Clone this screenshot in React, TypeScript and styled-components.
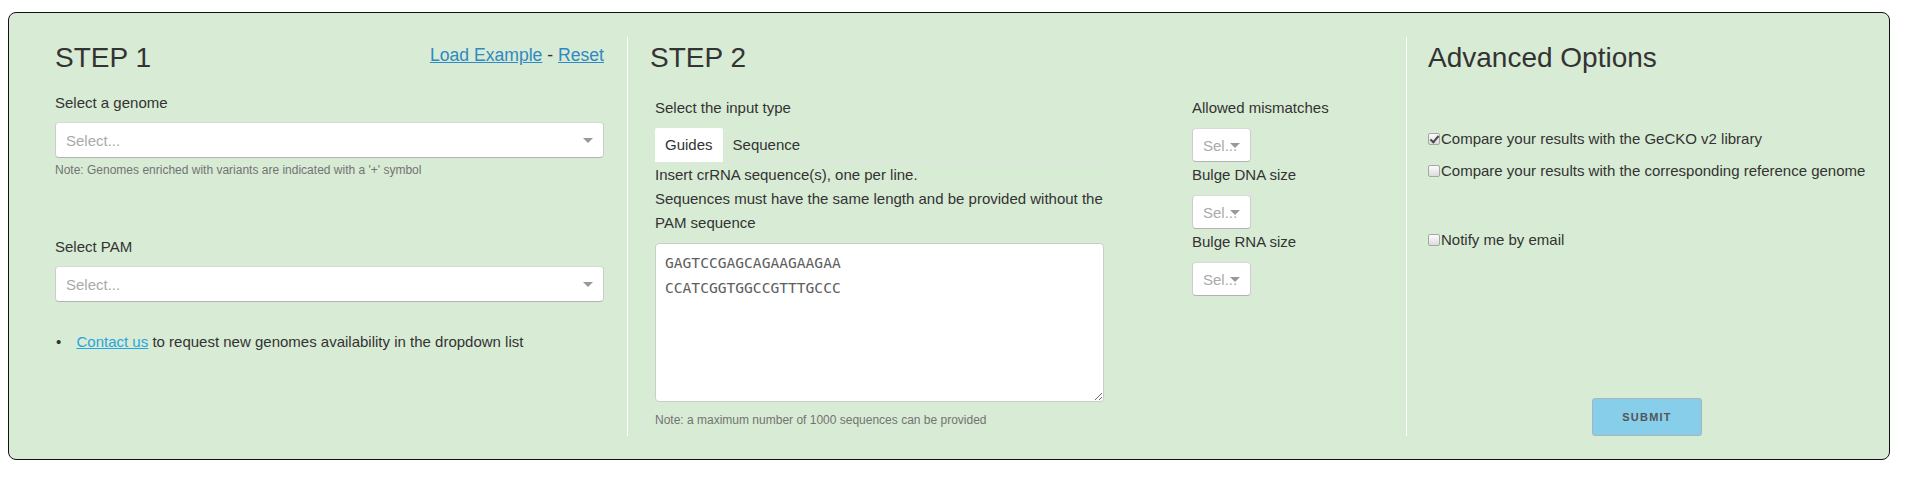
import React from "react";
import styled, { createGlobalStyle } from "styled-components";

const GlobalStyle = createGlobalStyle`
  html, body { margin: 0; padding: 0; background: #ffffff; }
  body {
    font-family: "Liberation Sans", Arial, Helvetica, sans-serif;
    font-size: 15px;
    color: #333333;
  }
  * { box-sizing: border-box; }
`;

const Page = styled.div`
  padding: 12px 0 17px 8px;
`;

const Panel = styled.form`
  width: 1882px;
  height: 448px;
  background: #d8ebd5;
  border: 1px solid #111;
  border-radius: 8px;
  padding: 24px 0 23px 46px;
  display: flex;
`;

const Column = styled.section<{ $divider?: boolean; $width?: number }>`
  display: flex;
  flex-direction: column;
  flex: ${(p) => (p.$width ? `0 0 ${p.$width}px` : "1 1 auto")};
  border-left: ${(p) => (p.$divider ? "1px solid #ffffff" : "none")};
`;

const StepOne = styled(Column)`
  padding-right: 23px;
`;

const StepTwo = styled(Column)`
  padding-left: 22px;
`;

const Advanced = styled(Column)`
  padding-left: 21px;
  padding-right: 23px;
`;

const Header = styled.div`
  display: flex;
  justify-content: space-between;
  align-items: flex-start;
  margin-top: 4px;
`;

const StepTitle = styled.h2`
  margin: 0;
  font-size: 28px;
  line-height: 33px;
  font-weight: 400;
  color: #333;
`;

const HeaderLinks = styled.div`
  margin-top: 3px;
  font-size: 17.6px;
  line-height: 22px;
  color: #333;
`;

const TextLink = styled.a<{ $tone?: "dark" | "light" }>`
  color: ${(p) => (p.$tone === "light" ? "#27a5dc" : "#3089c2")};
  text-decoration: underline;
  cursor: pointer;
`;

const FieldLabel = styled.label<{ $top?: number; $bottom?: number }>`
  display: block;
  margin-top: ${(p) => p.$top ?? 0}px;
  margin-bottom: ${(p) => p.$bottom ?? 8}px;
  line-height: 22px;
  font-size: 15px;
  font-weight: 400;
`;

const SelectBox = styled.div<{ $width?: number; $height?: number }>`
  display: grid;
  align-items: center;
  width: ${(p) => (p.$width ? `${p.$width}px` : "100%")};
  height: ${(p) => p.$height ?? 36}px;
  background: #ffffff;
  border: 1px solid #cccccc;
  border-color: #d9d9d9 #cccccc #b3b3b3;
  border-radius: 4px;
  cursor: default;
`;

const Placeholder = styled.span<{ $padRight?: number }>`
  grid-area: 1 / 1;
  padding: 0 ${(p) => p.$padRight ?? 30}px 0 10px;
  color: #aaaaaa;
  font-size: 15px;
  white-space: nowrap;
  overflow: hidden;
`;

const Caret = styled.span`
  grid-area: 1 / 1;
  justify-self: end;
  margin-right: 10px;
  width: 0;
  height: 0;
  border-style: solid;
  border-width: 5px 5px 2.5px;
  border-color: #999 transparent transparent;
  margin-top: 2px;
`;

const HelpNote = styled.p<{ $top?: number }>`
  margin: ${(p) => p.$top ?? 4}px 0 0;
  font-size: 12px;
  line-height: 17px;
  color: #737373;
`;

const BulletList = styled.ul`
  margin: 29px 0 0;
  padding: 0;
  list-style: none;
  line-height: 22px;
  font-size: 15px;
`;

const BulletItem = styled.li`
  &::before {
    content: "•";
    display: inline-block;
    width: 20.5px;
    padding-left: 1px;
    color: #333;
  }
`;

const StepBody = styled.div`
  display: grid;
  grid-template-columns: 449px auto;
  column-gap: 88px;
  margin-top: 23px;
  padding-left: 5px;
`;

const InputPane = styled.div`
  display: flex;
  flex-direction: column;
`;

const OptionPane = styled.div`
  display: flex;
  flex-direction: column;
  align-items: flex-start;
`;

const TabBar = styled.ul`
  display: flex;
  margin: 0;
  padding: 0;
  list-style: none;
  border-bottom: 1px solid #e3e3e3;
  height: 34px;
`;

const Tab = styled.li<{ $active?: boolean }>`
  padding: 6px 10px;
  line-height: 21px;
  height: 34px;
  margin-bottom: -1px;
  background: ${(p) => (p.$active ? "#ffffff" : "transparent")};
  border-radius: 2px 2px 0 0;
  color: #333;
  cursor: pointer;
`;

const Instructions = styled.p`
  margin: 1px 0 0;
  line-height: 24px;
`;

const SequenceArea = styled.textarea`
  margin-top: 8px;
  width: 449px;
  height: 159px;
  padding: 6px 9px;
  font-family: "DejaVu Sans Mono", "Liberation Mono", monospace;
  font-size: 14.6px;
  line-height: 25px;
  color: #5e5e5e;
  background: #ffffff;
  border: 1px solid #cccccc;
  border-radius: 4px;
  outline: none;
`;

const OptionSelect = styled(SelectBox)`
  margin-bottom: 2px;
`;

const CheckRow = styled.label<{ $top: number }>`
  display: block;
  margin-top: ${(p) => p.$top}px;
  line-height: 22px;
  font-size: 15px;
`;

const Check = styled.input.attrs({ type: "checkbox" })`
  appearance: none;
  -webkit-appearance: none;
  position: relative;
  width: 12px;
  height: 12px;
  margin: 0 1px 0 0;
  border: 1px solid #a6a6a6;
  border-radius: 2px;
  background: linear-gradient(#fcfcfc, #dcdcdc);
  vertical-align: -1px;
  &:checked::after {
    content: "";
    position: absolute;
    left: 3px;
    top: 0px;
    width: 3px;
    height: 7px;
    border: solid #4a4a4a;
    border-width: 0 2px 2px 0;
    transform: rotate(40deg);
  }
`;

const SubmitButton = styled.button`
  margin-top: auto;
  align-self: center;
  width: 110px;
  height: 38px;
  background: #87ceeb;
  border: 1px solid #a9b5bb;
  border-radius: 3px;
  font-family: "Liberation Sans", Arial, sans-serif;
  font-size: 11px;
  font-weight: 700;
  letter-spacing: 1.2px;
  color: #555555;
  cursor: pointer;
`;

function Dropdown() {
  return (
    <SelectBox>
      <Placeholder>Select...</Placeholder>
      <Caret />
    </SelectBox>
  );
}

function SmallDropdown() {
  return (
    <OptionSelect $width={59} $height={34}>
      <Placeholder $padRight={4}>Sel...</Placeholder>
      <Caret />
    </OptionSelect>
  );
}

export default function App() {
  return (
    <>
      <GlobalStyle />
      <Page>
        <Panel onSubmit={(e) => e.preventDefault()}>
          <StepOne $width={572}>
            <Header>
              <StepTitle>STEP 1</StepTitle>
              <HeaderLinks>
                <TextLink>Load Example</TextLink> - <TextLink>Reset</TextLink>
              </HeaderLinks>
            </Header>
            <FieldLabel $top={18}>Select a genome</FieldLabel>
            <Dropdown />
            <HelpNote>Note: Genomes enriched with variants are indicated with a '+' symbol</HelpNote>
            <FieldLabel $top={57}>Select PAM</FieldLabel>
            <Dropdown />
            <BulletList>
              <BulletItem>
                <TextLink $tone="light">Contact us</TextLink> to request new genomes availability in the dropdown list
              </BulletItem>
            </BulletList>
          </StepOne>

          <StepTwo $divider $width={779}>
            <Header>
              <StepTitle>STEP 2</StepTitle>
            </Header>
            <StepBody>
              <InputPane>
                <FieldLabel $bottom={9}>Select the input type</FieldLabel>
                <TabBar>
                  <Tab $active>Guides</Tab>
                  <Tab>Sequence</Tab>
                </TabBar>
                <Instructions>
                  Insert crRNA sequence(s), one per line.
                  <br />
                  Sequences must have the same length and be provided without the
                  <br />
                  PAM sequence
                </Instructions>
                <SequenceArea
                  spellCheck={false}
                  defaultValue={"GAGTCCGAGCAGAAGAAGAA\nCCATCGGTGGCCGTTTGCCC"}
                />
                <HelpNote $top={10}>Note: a maximum number of 1000 sequences can be provided</HelpNote>
              </InputPane>
              <OptionPane>
                <FieldLabel $bottom={9}>Allowed mismatches</FieldLabel>
                <SmallDropdown />
                <FieldLabel $bottom={9}>Bulge DNA size</FieldLabel>
                <SmallDropdown />
                <FieldLabel $bottom={9}>Bulge RNA size</FieldLabel>
                <SmallDropdown />
              </OptionPane>
            </StepBody>
          </StepTwo>

          <Advanced $divider>
            <Header>
              <StepTitle>Advanced Options</StepTitle>
            </Header>
            <CheckRow $top={54}>
              <Check defaultChecked />
              Compare your results with the GeCKO v2 library
            </CheckRow>
            <CheckRow $top={10}>
              <Check />
              Compare your results with the corresponding reference genome
            </CheckRow>
            <CheckRow $top={47}>
              <Check />
              Notify me by email
            </CheckRow>
            <SubmitButton type="submit">SUBMIT</SubmitButton>
          </Advanced>
        </Panel>
      </Page>
    </>
  );
}
